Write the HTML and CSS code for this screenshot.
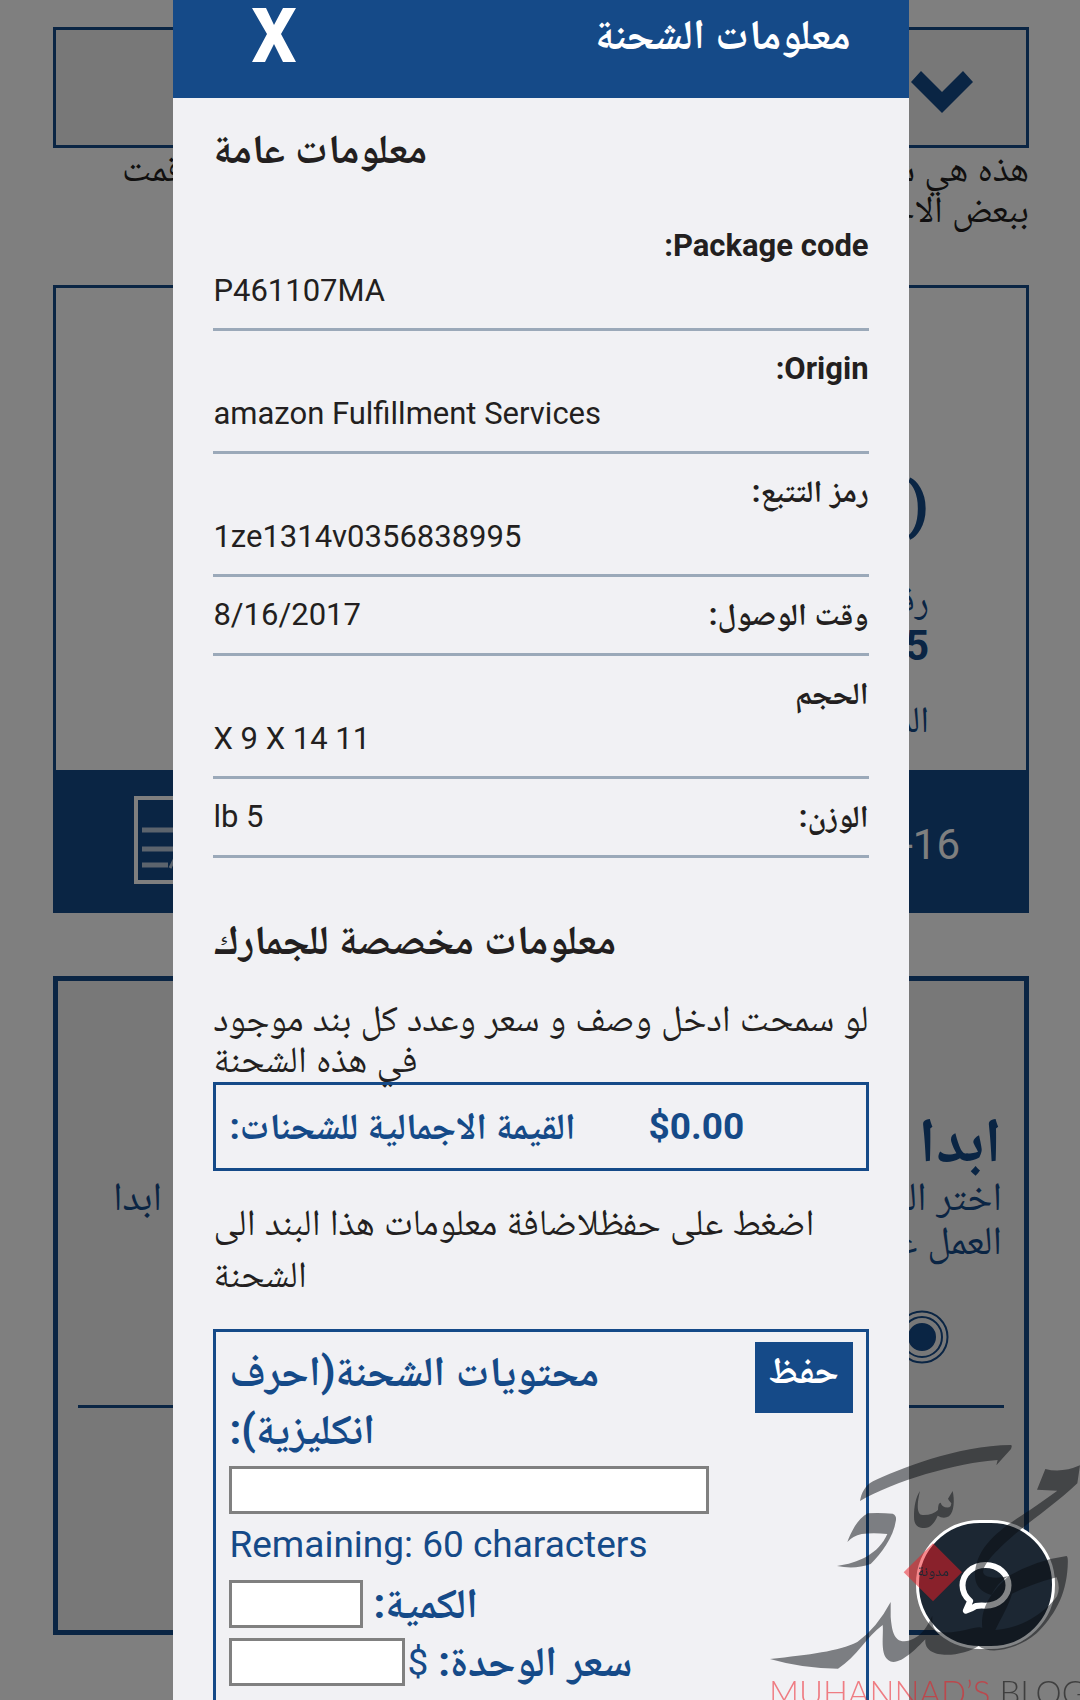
FILE: index.html
```html
<!DOCTYPE html>
<html lang="ar" dir="rtl">
<head>
<meta charset="utf-8">
<meta name="viewport" content="width=device-width, initial-scale=1">
<title>معلومات الشحنة</title>
<link rel="stylesheet" href="styles.css">
</head>
<body>
<main class="page">
  <section class="picker">
    <svg class="chevron" viewBox="0 0 62 42" aria-hidden="true"><path d="M10 0 31 21 52 0 62 11 31 42 0 11Z"/></svg>
  </section>
  <div class="intro">
    <p class="split"><span>هذه هي شحنة</span><span>قمت</span></p>
    <p>ببعض الاجراءات</p>
  </div>
  <section class="package">
    <div class="package-body">
      <p class="package-mark">(</p>
      <p class="package-text">رقم</p>
      <p class="package-number">5</p>
      <p class="package-text package-last">المرسل</p>
    </div>
    <div class="package-footer">
      <span>16-</span>
      <svg class="note" viewBox="0 0 88 88" aria-hidden="true"><path d="M2 2H86V86H2Z" stroke-width="4"/><path d="M8 34H80M8 53H80M8 69H34" stroke-width="5" opacity=".7"/><path d="M36 72 42 60" stroke-width="3" opacity=".7"/></svg>
    </div>
  </section>
  <section class="start">
    <h2>ابدا</h2>
    <p class="split"><span>اختر العمل</span><span>ابدا</span></p>
    <p>العمل على</p>
    <svg class="target" viewBox="0 0 54 54" aria-hidden="true"><circle cx="27" cy="27" r="25.500"/><circle cx="27" cy="27" r="20"/><circle class="dot" cx="27" cy="27" r="13"/></svg>
    <hr>
  </section>
</main>

<div class="backdrop">
  <div class="modal" role="dialog" aria-labelledby="title">
    <header class="modal-header">
      <h1 id="title">معلومات الشحنة</h1>
      <button class="close" type="button" aria-label="اغلاق"><svg viewBox="0 0 44 54"><path d="M0 0H14L22 17 31 0H44L29 26 44 54H31L22 36 13 54H0L15 26Z"/></svg></button>
    </header>
    <div class="modal-body">
      <h2>معلومات عامة</h2>
      <dl class="facts">
        <div class="fact stacked"><dt>Package code:</dt><dd>P461107MA</dd></div>
        <div class="fact stacked"><dt>Origin:</dt><dd>amazon Fulfillment Services</dd></div>
        <div class="fact stacked"><dt>رمز التتبع:</dt><dd>1ze1314v0356838995</dd></div>
        <div class="fact"><dt>وقت الوصول:</dt><dd>8/16/2017</dd></div>
        <div class="fact stacked"><dt>الحجم</dt><dd>11 X 9 X 14</dd></div>
        <div class="fact"><dt>الوزن:</dt><dd>5 lb</dd></div>
      </dl>
      <h2>معلومات مخصصة للجمارك</h2>
      <p class="lead">لو سمحت ادخل وصف و سعر وعدد كل بند موجود<br>في هذه الشحنة</p>
      <div class="total"><span class="amount">$0.00</span><span>القيمة الاجمالية للشحنات:</span></div>
      <p class="hint">اضغط على حفظلاضافة معلومات هذا البند الى<br>الشحنة</p>
      <form class="item">
        <button class="save" type="button">حفظ</button>
        <div class="fields">
          <label class="caption" for="contents">محتويات الشحنة(احرف<br>انكليزية):</label>
          <input id="contents" class="wide" type="text" maxlength="60">
          <p class="remaining" dir="ltr">Remaining: 60 characters</p>
          <div class="field"><label class="caption" for="qty">الكمية:</label><input id="qty" class="qty" type="text"></div>
          <div class="field price"><label class="caption" for="price">سعر الوحدة:</label><span class="currency">$</span><input id="price" class="cost" type="text"></div>
        </div>
      </form>
    </div>
  </div>
</div>

<button class="chat" type="button" aria-label="محادثة"><svg viewBox="0 0 158 156"><path d="M20 146 33 117Q10 98 10 70C10 36 40 9 79 9S148 36 148 70 118 131 79 131Q60 130 50 132 40 139 20 146Z"/></svg></button>

<div class="watermark">
  <svg viewBox="0 0 990 840" aria-hidden="true">
    <g class="ink">
      <path d="M330 243C334 221 344 197 369 184C440 150 620 76 784 75Q787 78 783 87L739 136L743 120C620 128 430 184 330 243Z"/>
      <path d="M510 213C502 245 498 285 518 285Q548 286 564 270Q564 248 572 248Q577 265 598 262Q604 258 604 250Q595 240 594 236L608 213C614 240 613 275 597 289Q580 298 563 287C553 310 540 324 524 324C503 324 492 315 492 290C492 260 497 232 510 213Z"/>
      <path d="M292 366C303 338 322 296 353 280Q390 278 428 281Q440 286 438 300C430 355 392 402 362 432Q315 449 261 438C325 429 386 402 412 342Q370 337 335 342Q308 348 292 366Z"/>
      <path d="M60 717C180 704 265 694 322 666Q380 625 422 546V590C425 625 430 664 463 664C507 660 530 624 547 587Q544 635 573 637C640 641 680 615 697 624C690 560 730 510 776 468Q860 420 950 408Q955 410 953 440C948 530 910 590 860 640C800 690 720 705 686 678C640 710 520 723 526 658C500 685 460 726 430 726C385 720 402 650 398 615C350 650 320 710 264 746Q160 746 60 717ZM736 630C812 626 884 580 921 529Q932 505 920 472Q850 490 786 521C775 560 755 590 736 630Z"/>
      <path d="M861 209 886 147Q935 160 990 136L982 190C930 240 860 290 810 330C750 380 710 420 701 447C690 470 730 480 776 468Q745 485 724 525C690 516 663 490 680 430C700 360 770 315 840 270Q890 235 922 212Z"/>
    </g>
    <path class="diamond" d="M549 370 636 457 549 544 461 457Z"/>
    <text class="tag" x="550" y="468">مدونة</text>
  </svg>
  <p dir="ltr"><span class="red">MUHANNAD’S</span> BLOG</p>
</div>
</body>
</html>
```
FILE: styles.css
```css
:root {
  --blue: #154a88;
  --ink: #231f20;
  --panel: #f1f1f4;
}
* { box-sizing: border-box; }
html, body { height: 100%; }
body {
  margin: 0;
  overflow: hidden;
  background: #fff;
  color: var(--ink);
  font-family: Roboto, "Noto Naskh Arabic", "DejaVu Sans", sans-serif;
  font-size: 31px;
  line-height: 45px;
}
h1, h2, p, dl, dd { margin: 0; }
button, input { font: inherit; }

/* Page behind the dialog */
.page { padding: 27px 51px 0 53px; }
.picker {
  display: flex;
  align-items: center;
  height: 121px;
  padding: 8px 53px 0;
  border: 3px solid var(--blue);
  background: #f1f1f1;
}
.chevron { width: 62px; height: 42px; fill: var(--blue); }
.intro { height: 137px; padding: 0 0 0 69px; font-size: 37px; line-height: 41px; }
.split { display: flex; justify-content: space-between; }
.package { border: 3px solid var(--blue); color: var(--blue); }
.package-body { height: 482px; padding: 175px 97px 0; }
.package-mark { font-size: 62px; font-weight: 700; line-height: 84px; }
.package-text { font-size: 37px; line-height: 41px; padding-top: 32px; }
.package-number { font-size: 42px; line-height: 52px; font-weight: 700; }
.package-footer {
  display: flex;
  align-items: center;
  justify-content: space-between;
  height: 140px;
  padding: 0 66px 0 78px;
  background: var(--blue);
  color: #fff;
  font-size: 42px;
}
.package-last { padding-top: 27px; }
.package-footer span { padding-top: 8px; }
.note { width: 88px; height: 88px; fill: none; stroke: #fff; }
.start {
  height: 659px;
  margin-top: 63px;
  padding: 126px 20px 0;
  border: 5px solid var(--blue);
  background: #f1f1f1;
  color: var(--blue);
  font-size: 40px;
  line-height: 44px;
}
.start h2 { padding: 0 2px; font-size: 63px; line-height: 68px; }
.start p { padding: 0 2px 0 35px; }
.target { display: block; width: 54px; height: 54px; margin: 47px 55px 0; fill: none; stroke: var(--blue); stroke-width: 2; }
.target .dot { fill: var(--blue); }
.start hr { height: 3px; margin: 41px 0 0; border: 0; background: var(--blue); }

/* Dialog */
.backdrop {
  position: fixed;
  inset: 0;
  display: flex;
  justify-content: center;
  padding-left: 2px;
  background: rgba(0, 0, 0, .5);
}
.modal { display: flex; flex-direction: column; width: 68.2%; background: var(--panel); }
.modal-header {
  display: flex;
  flex: none;
  align-items: flex-start;
  justify-content: space-between;
  height: 98px;
  padding: 8px 58px 0 79px;
  background: var(--blue);
  color: #fff;
}
h1 { font-size: 42px; line-height: 54px; }
.modal h2 { font-size: 41px; line-height: 60px; }
.close { padding: 0; border: 0; background: none; }
.close svg { display: block; width: 44px; height: 54px; fill: #fff; }
.modal-body { display: flex; flex: 1; flex-direction: column; padding: 21px 40px 0; text-align: left; }
.facts { padding: 29px 0 52px; }
.fact {
  display: flex;
  justify-content: space-between;
  padding: 15px 0 16px;
  border-bottom: 3px solid #9ba9b9;
}
.fact.stacked { flex-direction: column; padding-bottom: 15px; }
dt { font-weight: 700; text-align: right; }
.lead { padding: 28px 0 2px; font-size: 37px; line-height: 41px; white-space: nowrap; }
.total {
  display: flex;
  align-items: center;
  justify-content: flex-end;
  gap: 73px;
  height: 89px;
  padding: 0 13px;
  border: 3px solid var(--blue);
  color: var(--blue);
  font-size: 37px;
  font-weight: 700;
}
.hint { padding: 26px 0 28px; font-size: 37px; line-height: 52px; }
.item {
  display: flex;
  flex: 1;
  align-items: flex-start;
  justify-content: space-between;
  padding: 10px 13px 0;
  border: 3px solid var(--blue);
  border-bottom: 0;
  color: var(--blue);
  font-size: 37px;
}
.save {
  width: 98px;
  height: 71px;
  padding: 0 0 14px;
  border: 0;
  background: var(--blue);
  color: #fff;
  font-weight: 700;
}
.fields { width: 480px; padding-top: 1px; }
.caption { display: block; font-size: 42px; line-height: 58px; font-weight: 700; }
.fields input { height: 48px; border: 3px solid #808080; background: #fff; }
.fields .wide { display: block; width: 100%; margin-top: 7px; }
.remaining { padding: 8px 0; }
.field { display: flex; align-items: center; justify-content: flex-end; gap: 10px; height: 58px; }
.field.price { gap: 2px; }
.currency { margin-right: 8px; }
.fields .qty { width: 134px; }
.fields .cost { width: 176px; }

/* Floating elements */
.chat {
  position: fixed;
  right: 25px;
  bottom: 51px;
  width: 139px;
  height: 129px;
  padding: 6px 0 0;
  border: 3px solid #fff;
  border-radius: 64px;
  background: #1c2733;
}
.chat svg { display: block; width: 53px; height: 52px; margin: 0 auto; fill: none; stroke: #fff; stroke-width: 18; stroke-linejoin: round; }
.watermark { position: fixed; right: 0; bottom: 0; width: 330px; height: 280px; pointer-events: none; }
.watermark svg { display: block; width: 330px; height: 280px; }
.ink { fill: #090c10; opacity: .5; }
.diamond { fill: #ed1c24; opacity: .52; }
.tag { fill: #1c2733; font-size: 44px; text-anchor: middle; }
.watermark p {
  position: absolute;
  left: 19px;
  bottom: -12px;
  color: rgba(0, 0, 0, .5);
  font-family: Lato, sans-serif;
  font-size: 33px;
  font-weight: 300;
  line-height: 40px;
  white-space: nowrap;
}
.red { color: rgba(237, 28, 36, .55); }
```
